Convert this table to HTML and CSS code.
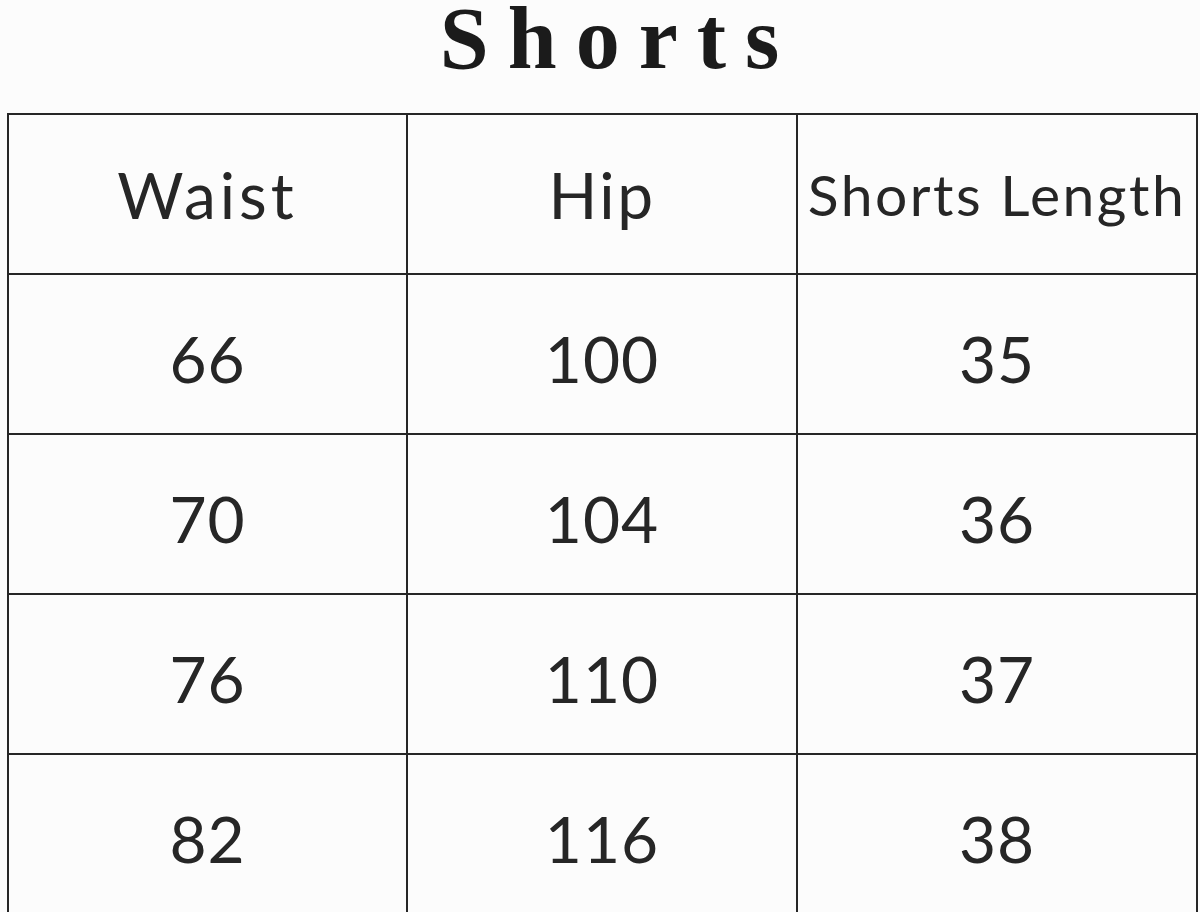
FILE: index.html
```html
<!DOCTYPE html>
<html lang="en">
<head>
<meta charset="utf-8">
<title>Shorts</title>
<link rel="stylesheet" href="styles.css">
</head>
<body>
<div class="page">
  <h1 class="title">Shorts</h1>
  <table class="size-table">
    <colgroup>
      <col class="col-a"><col class="col-b"><col class="col-c">
    </colgroup>
    <thead>
      <tr>
        <th class="wide">Waist</th>
        <th>Hip</th>
        <th class="small">Shorts Length</th>
      </tr>
    </thead>
    <tbody>
      <tr><td>66</td><td>100</td><td>35</td></tr>
      <tr><td>70</td><td>104</td><td>36</td></tr>
      <tr><td>76</td><td>110</td><td>37</td></tr>
      <tr><td>82</td><td>116</td><td>38</td></tr>
    </tbody>
  </table>
</div>
</body>
</html>
```
FILE: styles.css
```css
html, body {
  margin: 0;
  padding: 0;
  background: #fcfcfc;
}
.page {
  width: 1200px;
  height: 912px;
  overflow: hidden;
}
.title {
  margin: 0;
  height: 113px;
  box-sizing: border-box;
  padding-top: 0;
  padding-left: 38px;
  text-align: center;
  font-family: "Liberation Serif", "DejaVu Serif", serif;
  font-weight: bold;
  font-size: 88px;
  line-height: 78px;
  letter-spacing: 19px;
  color: #1b1b1b;
}
.size-table {
  margin-left: 7px;
  width: 1189px;
  border-collapse: collapse;
  table-layout: fixed;
  font-family: Lato, "Liberation Sans", sans-serif;
  color: #262626;
}
.col-a { width: 399px; }
.col-b { width: 390px; }
.col-c { width: 400px; }
.size-table th,
.size-table td {
  border: 2px solid #262626;
  text-align: center;
  height: 158px;
  padding: 0;
  font-weight: normal;
  font-size: 64px;
  letter-spacing: 1px;
}
.size-table th {
  letter-spacing: 2.5px;
}
.size-table th.wide {
  letter-spacing: 4px;
}
.size-table td {
  padding-top: 8px;
  height: 150px;
}
.size-table th.small {
  font-size: 57px;
  letter-spacing: 2.5px;
  white-space: nowrap;
}
```
